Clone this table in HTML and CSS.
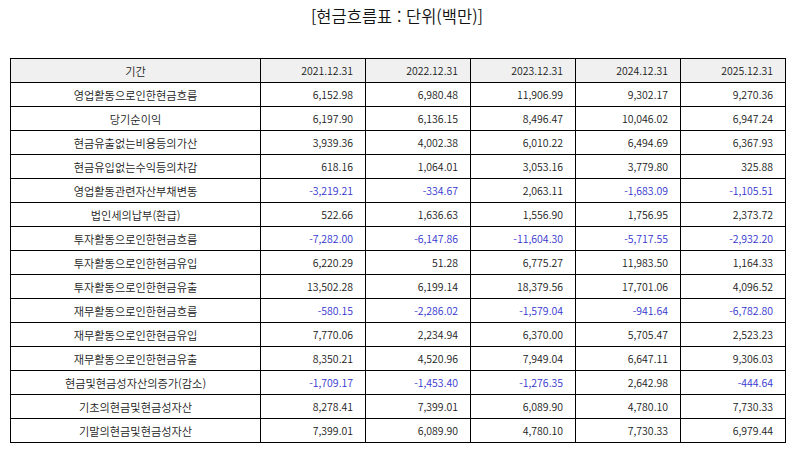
FILE: index.html
```html
<!DOCTYPE html>
<html lang="ko">
<head>
<meta charset="utf-8">
<title>현금흐름표</title>
<link rel="stylesheet" href="styles.css">
</head>
<body>
<div class="page">
  <h1 class="title">[현금흐름표 : 단위(백만)]</h1>
  <table class="cf">
    <colgroup>
      <col class="c-name"><col class="c-val"><col class="c-val"><col class="c-val"><col class="c-val"><col class="c-val">
    </colgroup>
    <thead>
      <tr><th class="name">기간</th><th>2021.12.31</th><th>2022.12.31</th><th>2023.12.31</th><th>2024.12.31</th><th>2025.12.31</th></tr>
    </thead>
    <tbody>
      <tr><td class="name">영업활동으로인한현금흐름</td><td>6,152.98</td><td>6,980.48</td><td>11,906.99</td><td>9,302.17</td><td>9,270.36</td></tr>
      <tr><td class="name">당기순이익</td><td>6,197.90</td><td>6,136.15</td><td>8,496.47</td><td>10,046.02</td><td>6,947.24</td></tr>
      <tr><td class="name">현금유출없는비용등의가산</td><td>3,939.36</td><td>4,002.38</td><td>6,010.22</td><td>6,494.69</td><td>6,367.93</td></tr>
      <tr><td class="name">현금유입없는수익등의차감</td><td>618.16</td><td>1,064.01</td><td>3,053.16</td><td>3,779.80</td><td>325.88</td></tr>
      <tr><td class="name">영업활동관련자산부채변동</td><td class="neg">-3,219.21</td><td class="neg">-334.67</td><td>2,063.11</td><td class="neg">-1,683.09</td><td class="neg">-1,105.51</td></tr>
      <tr><td class="name">법인세의납부(환급)</td><td>522.66</td><td>1,636.63</td><td>1,556.90</td><td>1,756.95</td><td>2,373.72</td></tr>
      <tr><td class="name">투자활동으로인한현금흐름</td><td class="neg">-7,282.00</td><td class="neg">-6,147.86</td><td class="neg">-11,604.30</td><td class="neg">-5,717.55</td><td class="neg">-2,932.20</td></tr>
      <tr><td class="name">투자활동으로인한현금유입</td><td>6,220.29</td><td>51.28</td><td>6,775.27</td><td>11,983.50</td><td>1,164.33</td></tr>
      <tr><td class="name">투자활동으로인한현금유출</td><td>13,502.28</td><td>6,199.14</td><td>18,379.56</td><td>17,701.06</td><td>4,096.52</td></tr>
      <tr><td class="name">재무활동으로인한현금흐름</td><td class="neg">-580.15</td><td class="neg">-2,286.02</td><td class="neg">-1,579.04</td><td class="neg">-941.64</td><td class="neg">-6,782.80</td></tr>
      <tr><td class="name">재무활동으로인한현금유입</td><td>7,770.06</td><td>2,234.94</td><td>6,370.00</td><td>5,705.47</td><td>2,523.23</td></tr>
      <tr><td class="name">재무활동으로인한현금유출</td><td>8,350.21</td><td>4,520.96</td><td>7,949.04</td><td>6,647.11</td><td>9,306.03</td></tr>
      <tr><td class="name">현금및현금성자산의증가(감소)</td><td class="neg">-1,709.17</td><td class="neg">-1,453.40</td><td class="neg">-1,276.35</td><td>2,642.98</td><td class="neg">-444.64</td></tr>
      <tr><td class="name">기초의현금및현금성자산</td><td>8,278.41</td><td>7,399.01</td><td>6,089.90</td><td>4,780.10</td><td>7,730.33</td></tr>
      <tr><td class="name">기말의현금및현금성자산</td><td>7,399.01</td><td>6,089.90</td><td>4,780.10</td><td>7,730.33</td><td>6,979.44</td></tr>
    </tbody>
  </table>
</div>
</body>
</html>
```
FILE: styles.css
```css
html, body {
  margin: 0;
  padding: 0;
  background: #ffffff;
}
body {
  font-family: "Noto Sans CJK KR", "Noto Sans", sans-serif;
  color: #111111;
}
.page {
  padding: 0 10px;
}
.title {
  margin: 0;
  height: 58px;
  padding-top: 3px;
  box-sizing: border-box;
  line-height: 26px;
  font-size: 16.5px;
  font-weight: 350;
  text-align: center;
  color: #111111;
}
.cf {
  width: 775px;
  border-collapse: collapse;
  table-layout: fixed;
  font-size: 10.5px;
  font-weight: 350;
}
.c-name { width: 250px; }
.c-val { width: 105px; }
.cf th, .cf td {
  border: 1px solid #000000;
  height: 24px;
  padding: 0 12px 0 4px;
  box-sizing: border-box;
  text-align: right;
  font-weight: 350;
  white-space: nowrap;
  line-height: 22px;
  color: #1a1a1a;
}
.cf thead th {
  background: #f0f0f0;
}
.cf .name {
  text-align: center;
  padding: 0 4px;
  font-size: 11.2px;
}
.cf .neg {
  color: #3535cf;
}
```
